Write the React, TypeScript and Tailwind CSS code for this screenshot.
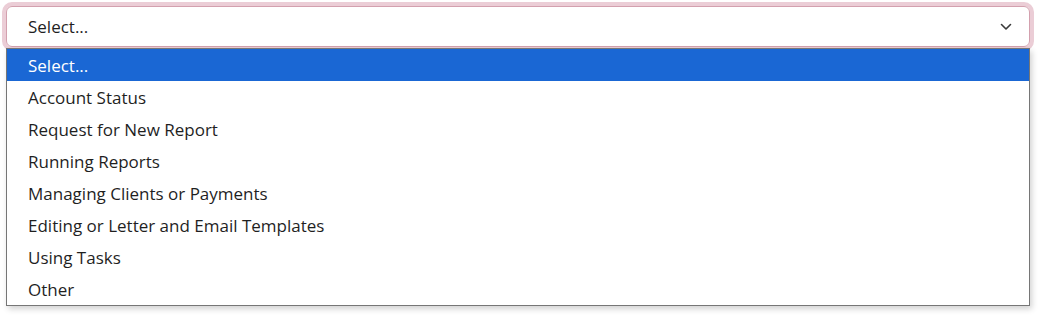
import React from "react";

const options = [
  "Select...",
  "Account Status",
  "Request for New Report",
  "Running Reports",
  "Managing Clients or Payments",
  "Editing or Letter and Email Templates",
  "Using Tasks",
  "Other",
];

export default function App() {
  return (
    <div className="h-[315px] w-[1040px] bg-white font-['Open_Sans',sans-serif] text-[17px] text-[#1f1f1f]">
      <div className="pl-[6px] pr-[10px] pt-[6px]">
        {/* closed select with focus ring */}
        <div className="flex h-[41px] items-center justify-between rounded-[6px] border border-[#d3a0ae] pl-[21px] pr-[17px] shadow-[0_0_0_4px_#ebcdd6]">
          <span className="pt-px">Select...</span>
          <svg width="12" height="8" viewBox="0 0 12 8" fill="none">
            <path d="M1.5 1.5 6 6l4.5-4.5" stroke="#3a3a3a" strokeWidth="1.6" strokeLinecap="round" strokeLinejoin="round" />
          </svg>
        </div>

        {/* open listbox */}
        <ul className="mt-px border border-[#767676] bg-white shadow-[2px_3px_6px_rgba(0,0,0,0.18)]">
          {options.map((opt, i) => (
            <li
              key={opt}
              className={
                i === 0
                  ? "flex h-[32px] items-center bg-[#1a67d4] pl-[21px] pt-px text-white"
                  : "flex h-[32px] items-center pl-[21px] pt-px"
              }
            >
              {opt}
            </li>
          ))}
        </ul>
      </div>
    </div>
  );
}
